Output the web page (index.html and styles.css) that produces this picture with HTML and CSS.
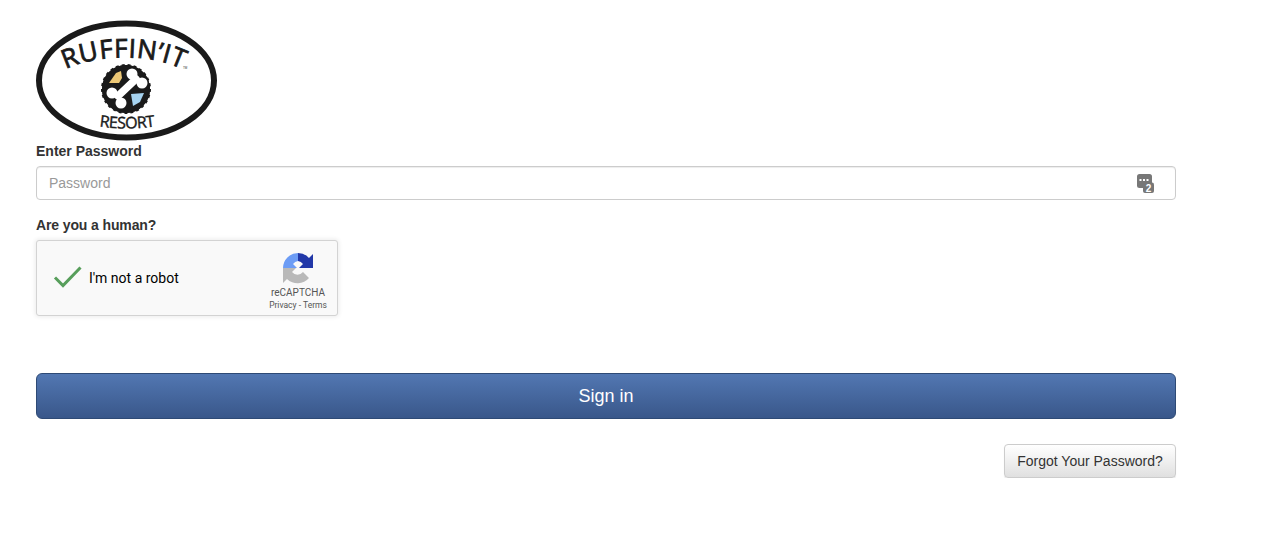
FILE: index.html
```html
<!DOCTYPE html>
<html lang="en">
<head>
<meta charset="utf-8">
<title>Sign in</title>
<link rel="stylesheet" href="styles.css">
</head>
<body>
<main class="page">
  <svg class="logo" viewBox="0 0 183 122" width="183" height="122" role="img" aria-label="Ruffin'It Resort">
    <ellipse cx="90.500" cy="60.500" rx="87.500" ry="57" fill="#fff" stroke="#1a1a1a" stroke-width="6"/>
    <defs>
      <path id="arc-top" d="M18 57 C48 31 128 31 158 57"/>
      <path id="arc-bottom" d="M60 106 Q91 111 122 106"/>
    </defs>
    <text class="logo-title"><textPath href="#arc-top" startOffset="50%" text-anchor="middle">RUFFIN’IT</textPath></text>
    <text class="logo-sub"><textPath href="#arc-bottom" startOffset="50%" text-anchor="middle">RESORT</textPath></text>
    <circle class="badge-edge" cx="90" cy="69" r="24"/>
    <circle cx="90" cy="69" r="24" fill="#1a1a1a"/>
    <path d="M73 63 L80 53 L85 51 L86 58 L83 63 Z" fill="#edc876"/>
    <path d="M95 74 L108 73 L104 82 L97 86 Z" fill="#a6d3f0"/>
    <path d="M82 76 L100 59" stroke="#fff" stroke-width="7.500" stroke-linecap="round"/>
    <circle cx="96" cy="54" r="5.500" fill="#fff"/>
    <circle cx="106" cy="63" r="5.500" fill="#fff"/>
    <circle cx="76" cy="73" r="5.500" fill="#fff"/>
    <circle cx="85" cy="83" r="5.500" fill="#fff"/>
    <text class="logo-tm" x="147" y="49">TM</text>
  </svg>

  <form class="login">
    <label class="field-label" for="password">Enter Password</label>
    <div class="input-wrap">
      <input id="password" class="input" type="text" placeholder="Password">
      <svg class="otp-icon" viewBox="0 0 17 19" width="17" height="19" aria-hidden="true">
        <rect x="0" y="0" width="15" height="14" rx="2.500" fill="#777"/>
        <rect x="2.500" y="5" width="2" height="2" fill="#fff"/>
        <rect x="6" y="5" width="2" height="2" fill="#fff"/>
        <rect x="9.500" y="5" width="2" height="2" fill="#fff"/>
        <rect x="6" y="8.500" width="11" height="10.500" rx="2" fill="#777"/>
        <text class="otp-digit" x="11.500" y="17.500">2</text>
      </svg>
    </div>

    <label class="field-label human-label">Are you a human?</label>
    <div class="captcha">
      <svg class="check" viewBox="0 0 30 24" width="30" height="24" aria-hidden="true">
        <path d="M2 12.500 L10 20.500 L27.500 2.500" fill="none" stroke="#579e5b" stroke-width="3"/>
      </svg>
      <span class="captcha-text">I'm not a robot</span>
      <div class="captcha-brand">
        <svg class="captcha-logo" viewBox="0 0 32 32" width="32" height="32" aria-hidden="true">
          <path d="M1 16 A15 15 0 0 1 16 1 L16 9 A7 7 0 0 0 11 12 L15 16 Z" fill="#6c9cf5"/>
          <path d="M16 1 A15 15 0 0 1 27 6 L31 2 L31 16 L17 16 L21 12 A7 7 0 0 0 16 9 Z" fill="#2238a8"/>
          <path d="M1 16 L14 16 L10 20 A7 7 0 0 0 21 20 L27 26 A15 15 0 0 1 5 27 L1 31 Z" fill="#b9b9b9"/>
        </svg>
        <div class="captcha-name">reCAPTCHA</div>
        <div class="captcha-links">Privacy - Terms</div>
      </div>
    </div>

    <button class="signin" type="button">Sign in</button>
    <div class="forgot-row">
      <button class="forgot" type="button">Forgot Your Password?</button>
    </div>
  </form>
</main>
</body>
</html>
```
FILE: styles.css
```css
* { box-sizing: border-box; }

html, body { margin: 0; background: #fff; }

body {
  font-family: "Liberation Sans", Arial, sans-serif;
  font-size: 14px;
  line-height: 20px;
  color: #333;
}

.page {
  width: 1140px;
  margin-left: 36px;
  padding-top: 20px;
}

.logo { display: block; margin-bottom: -1px; }

.logo-title {
  font-family: "Open Sans", sans-serif;
  font-size: 26px;
  font-weight: 400;
  letter-spacing: .6px;
  fill: #1a1a1a;
  stroke: #1a1a1a;
  stroke-width: .8px;
}

.logo-sub {
  font-family: "Open Sans", sans-serif;
  font-size: 16px;
  letter-spacing: -.5px;
  fill: #1a1a1a;
  stroke: #1a1a1a;
  stroke-width: .4px;
}

.badge-edge {
  fill: #1a1a1a;
  stroke: #1a1a1a;
  stroke-width: 2px;
  stroke-dasharray: 3 3;
}

.logo-tm {
  font-family: "Liberation Sans", sans-serif;
  font-size: 3px;
  fill: #333;
}

.login { display: flex; flex-direction: column; }

.field-label {
  display: block;
  font-weight: 700;
  margin-bottom: 5px;
}

.human-label { margin-top: 15px; letter-spacing: -.12px; }

.input-wrap { position: relative; }

.input {
  display: block;
  width: 100%;
  height: 34px;
  padding: 6px 12px;
  border: 1px solid #ccc;
  border-radius: 4px;
  box-shadow: inset 0 1px 1px rgba(0, 0, 0, .075);
  font: 14px/20px "Liberation Sans", Arial, sans-serif;
  color: #555;
  background: #fff;
}

.input::placeholder { color: #999; opacity: 1; }

.otp-icon {
  position: absolute;
  top: 8px;
  right: 22px;
}

.otp-digit {
  font-family: "Liberation Sans", sans-serif;
  font-size: 10px;
  font-weight: 700;
  fill: #fff;
  text-anchor: middle;
}

.captcha {
  display: flex;
  align-items: center;
  width: 302px;
  height: 76px;
  padding-left: 16px;
  background: #f9f9f9;
  border: 1px solid #d3d3d3;
  border-radius: 3px;
  box-shadow: 0 0 4px 1px rgba(0, 0, 0, .08);
  font-family: Roboto, "Liberation Sans", sans-serif;
}

.check { flex: none; margin-top: -3px; }

.captcha-text {
  margin-left: 6px;
  font-size: 14px;
  color: #000;
}

.captcha-brand {
  display: flex;
  flex-direction: column;
  align-items: center;
  margin-left: auto;
  width: 70px;
  margin-right: 4px;
  padding-top: 6px;
}

.captcha-logo { display: block; margin-bottom: 3px; }

.captcha-name {
  font-size: 10px;
  line-height: 12px;
  color: #555;
}

.captcha-links {
  font-size: 8.5px;
  line-height: 12px;
  color: #555;
}

.signin {
  height: 46px;
  margin-top: 57px;
  border: 1px solid #2e4a75;
  border-radius: 6px;
  background: linear-gradient(#5277b2, #39578a);
  color: #fff;
  font: 18px/24px "Liberation Sans", Arial, sans-serif;
}

.forgot-row {
  display: flex;
  justify-content: flex-end;
  margin-top: 25px;
}

.forgot {
  height: 34px;
  width: 172px;
  padding: 0;
  border: 1px solid #ccc;
  border-radius: 4px;
  background: linear-gradient(#fff, #e0e0e0);
  box-shadow: 0 1px 1px rgba(0, 0, 0, .1);
  color: #333;
  font: 14px/20px "Liberation Sans", Arial, sans-serif;
}
```
